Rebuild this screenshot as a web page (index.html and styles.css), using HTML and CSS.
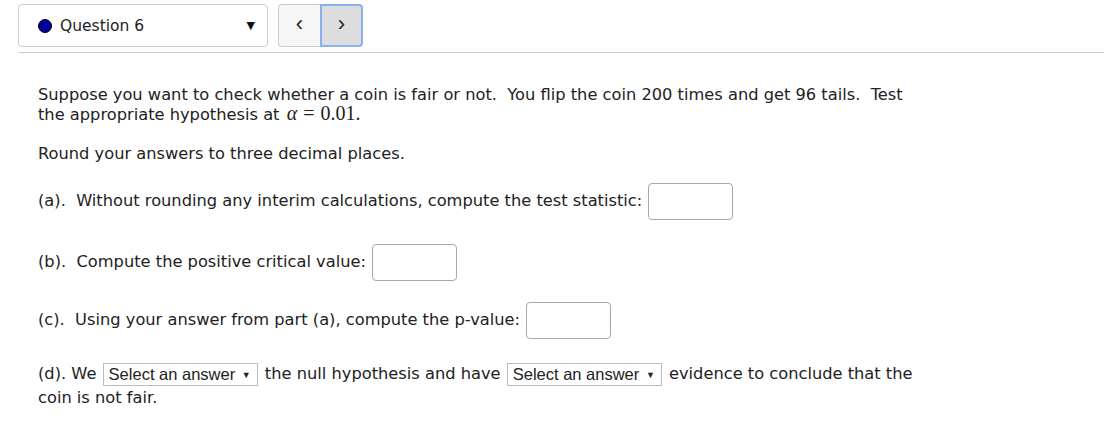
FILE: index.html
```html
<!DOCTYPE html>
<html>
<head>
<meta charset="utf-8">
<link rel="stylesheet" href="styles.css">
</head>
<body>
<div class="topbar">
  <div class="qselect">
    <span class="dot"></span>
    <span class="qlabel">Question 6</span>
    <span class="caret">&#9660;</span>
  </div>
  <div class="navgroup">
    <button class="navbtn prev">&lsaquo;</button>
    <button class="navbtn next">&rsaquo;</button>
  </div>
</div>
<div class="question">
  <p class="intro">Suppose you want to check whether a coin is fair or not.&nbsp; You flip the coin 200 times and get 96 tails.&nbsp; Test the appropriate hypothesis at <span class="math"><i>α</i><span class="eq">=</span>0.01.</span></p>
  <p class="round">Round your answers to three decimal places.</p>
  <p class="part pa">(a).&nbsp; Without rounding any interim calculations, compute the test statistic: <span class="ans"></span></p>
  <p class="part pb">(b).&nbsp; Compute the positive critical value: <span class="ans"></span></p>
  <p class="part pc">(c).&nbsp; Using your answer from part (a), compute the p-value: <span class="ans"></span></p>
  <p class="pd">(d). We <span class="sel">Select an answer <span class="tri">&#9660;</span></span> the null hypothesis and have <span class="sel">Select an answer <span class="tri">&#9660;</span></span> evidence to conclude that the coin is not fair.</p>
</div>
</body>
</html>
```
FILE: styles.css
```css
body {
  margin: 0;
  font-family: "DejaVu Sans", "Open Sans", sans-serif;
  font-size: 16.25px;
  color: #222;
  background: #fff;
}
.topbar {
  display: flex;
  align-items: flex-start;
  margin-left: 18px;
  padding-top: 4px;
  padding-bottom: 5px;
  border-bottom: 1px solid #ccc;
}
.qselect {
  box-sizing: border-box;
  width: 250px;
  height: 43px;
  border: 1px solid #ccc;
  border-radius: 4px;
  display: flex;
  align-items: center;
  padding-left: 19px;
  padding-right: 12px;
}
.dot {
  width: 14px;
  height: 14px;
  border-radius: 50%;
  background: #00009c;
  border: 1px solid #000;
  box-sizing: border-box;
  margin-right: 8px;
}
.qlabel {
  flex: 1;
  font-size: 15.5px;
  color: #222;
  padding-top: 1px;
}
.caret {
  font-size: 11px;
  color: #111;
}
.navgroup {
  display: flex;
  margin-left: 10px;
}
.navbtn {
  box-sizing: border-box;
  width: 42px;
  height: 43px;
  font-family: "Liberation Sans", sans-serif;
  font-size: 22px;
  line-height: 1;
  color: #222;
  padding: 0 0 4px 0;
  margin: 0;
}
.prev {
  background: #f6f6f6;
  border: 1px solid #ccc;
  border-right: none;
  border-radius: 4px 0 0 4px;
}
.next {
  width: 43px;
  background: #ddd;
  border: 2px solid #8ab0f0;
  border-radius: 0 4px 4px 0;
}
.question {
  width: 880px;
  padding-left: 38px;
  padding-top: 32px;
}
.question p {
  margin: 0;
  line-height: 20px;
}
.math {
  font-family: "Liberation Serif", serif;
  font-size: 20px;
  line-height: 0;
  margin-left: 2px;
}
.eq {
  margin: 0 6px;
}
.question .round {
  margin-top: 19px;
}
.question .part {
  line-height: 37px;
  height: 37px;
}
.question .pa {
  margin-top: 18px;
}
.question .pb {
  margin-top: 24px;
}
.question .pc {
  margin-top: 21px;
}
.question .pd {
  margin-top: 24px;
  line-height: 23px;
}
.ans {
  display: inline-block;
  box-sizing: border-box;
  width: 85px;
  height: 37px;
  border: 1px solid #a8a8a8;
  border-radius: 4px;
  vertical-align: middle;
  margin-left: 1px;
}
.sel {
  display: inline-block;
  box-sizing: border-box;
  height: 23px;
  border: 1px solid #bbb;
  padding: 0 6px 0 5px;
  font-family: "Liberation Sans", sans-serif;
  font-size: 16.5px;
  line-height: 21px;
  color: #222;
  vertical-align: middle;
  margin: 0 2px 0 1px;
}
.tri {
  font-size: 9px;
  vertical-align: 2px;
  margin-left: 2px;
}
```
